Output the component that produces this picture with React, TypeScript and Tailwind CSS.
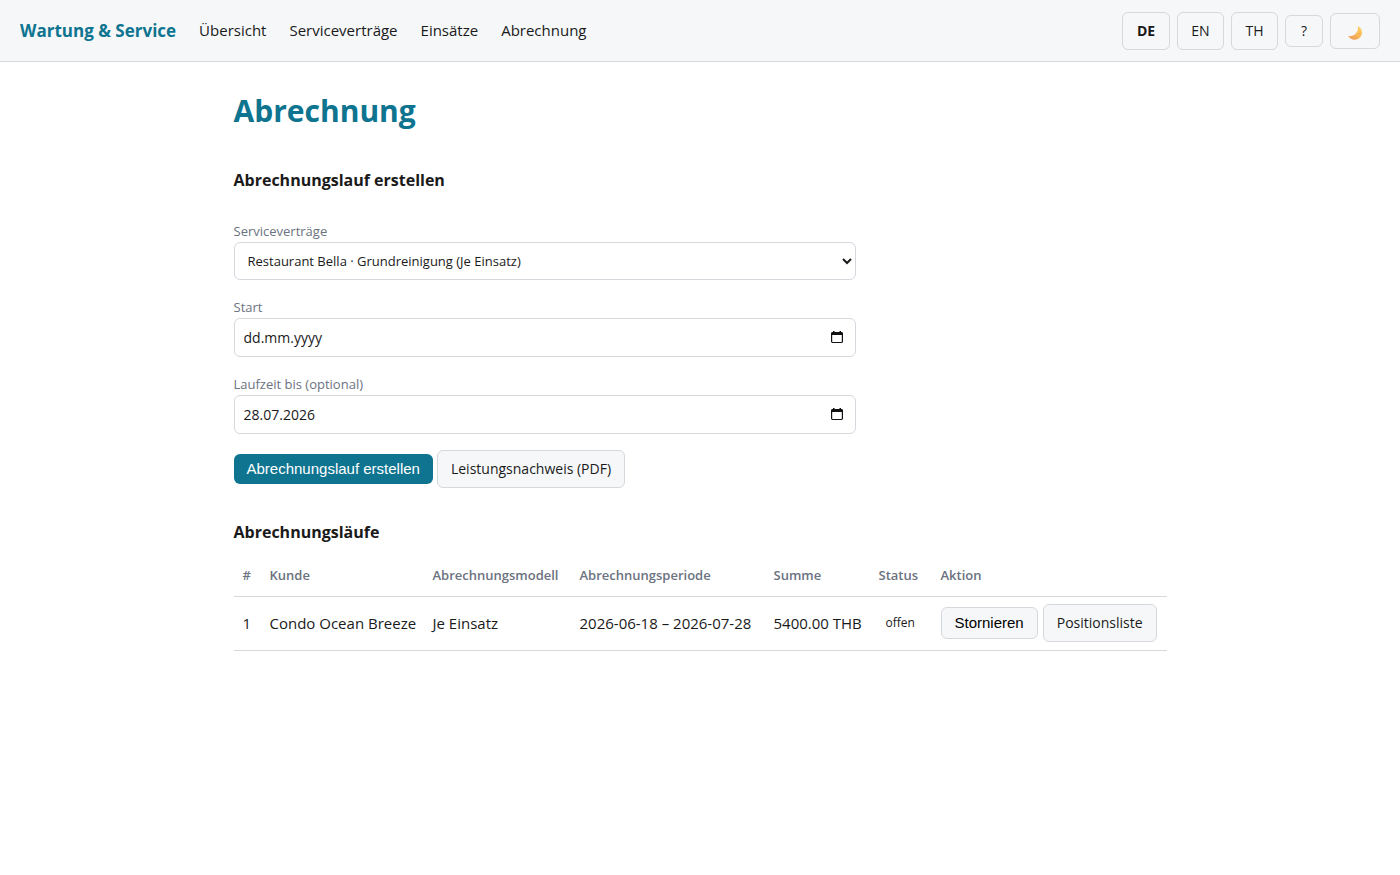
import { useState, type ReactNode } from "react";

const navItems = ["Übersicht", "Serviceverträge", "Einsätze", "Abrechnung"];
const languages = ["DE", "EN", "TH"];
const contracts = ["Restaurant Bella · Grundreinigung (Je Einsatz)", "Condo Ocean Breeze · Je Einsatz"];

const columns = [
  { title: "#", width: "w-[27px]" },
  { title: "Kunde", width: "w-[163px]" },
  { title: "Abrechnungsmodell", width: "w-[147px]" },
  { title: "Abrechnungsperiode", width: "w-[194px]" },
  { title: "Summe", width: "w-[105px]" },
  { title: "Status", width: "w-[62px]" },
  { title: "Aktion", width: "w-[235px]" },
];

const runs = [
  {
    id: 1,
    customer: "Condo Ocean Breeze",
    model: "Je Einsatz",
    period: "2026-06-18 – 2026-07-28",
    total: "5400.00 THB",
    status: "offen",
  },
];

function MoonIcon() {
  return (
    <svg viewBox="0 0 16 16" className="size-4" aria-hidden="true">
      <defs>
        <linearGradient id="moon" x1="0" y1="1" x2="1" y2="0">
          <stop offset="0" stopColor="#e8935a" />
          <stop offset="0.5" stopColor="#fbb858" />
          <stop offset="1" stopColor="#ffd76a" />
        </linearGradient>
      </defs>
      <path
        d="M10.8 1C13.8 2.400 15.500 5.300 15 8.600C14.400 12.400 11.200 15 7.400 14.800C4.600 14.700 2.200 13.200 1 10.800C3.400 11.600 6.200 11.100 8.300 9.100C10.700 6.900 11.600 3.900 10.800 1Z"
        fill="url(#moon)"
      />
      <circle cx="12.600" cy="9" r="0.800" fill="#f0a050" />
      <circle cx="9" cy="12.300" r="0.700" fill="#e89550" />
    </svg>
  );
}

function CalendarIcon() {
  return (
    <svg viewBox="0 0 12 13" className="h-[13px] w-3" aria-hidden="true">
      <path
        fill="#111"
        fillRule="evenodd"
        d="M2 0h1.500v1h5V0H10v1h.5c.8 0 1.500.6 1.500 1.400v8.200c0 .8-.7 1.400-1.500 1.400h-9C.7 12 0 11.400 0 10.600V2.400C0 1.600.7 1 1.500 1H2zM1.200 4v6.400c0 .3.200.5.5.5h8.600c.3 0 .5-.2.5-.5V4z"
      />
    </svg>
  );
}

function DateField({ id, label, initial }: { id: string; label: string; initial: string }) {
  const [value, setValue] = useState(initial);
  return (
    <div className="mb-4 flex flex-col">
      <label htmlFor={id} className="text-[13px] leading-[22px] text-[#6b7280]">
        {label}
      </label>
      <div className="flex h-[39px] items-center rounded-md border border-[#d5d8dd] bg-white pr-3 pl-[9px]">
        <input
          id={id}
          type="text"
          value={value}
          placeholder="dd.mm.yyyy"
          onChange={(e) => setValue(e.target.value)}
          className="min-w-0 flex-1 text-sm outline-none placeholder:text-[#1a1a1a]"
        />
        <button type="button" aria-label={`${label}: Kalender`}>
          <CalendarIcon />
        </button>
      </div>
    </div>
  );
}

function LinkButton({ children }: { children: ReactNode }) {
  return (
    <a
      href="#"
      className="flex h-[38px] items-center rounded-md border border-[#d5d8dd] bg-[#f5f7f9] px-[13px] text-sm"
    >
      {children}
    </a>
  );
}

export default function App() {
  const [language, setLanguage] = useState("DE");
  return (
    <div className="bg-white font-['Open_Sans','Noto_Sans',sans-serif] text-[15px] text-[#1a1a1a]">
      <header className="flex min-h-[62px] flex-wrap items-center justify-between gap-x-4 border-b border-[#d5d8dd] bg-[#f5f7f9] px-5">
        <div className="flex flex-wrap items-center gap-[23px]">
          <a href="#" className="text-[17px] font-bold text-[#0e7490]">
            Wartung &amp; Service
          </a>
          <nav className="flex flex-wrap gap-[23px] text-[15px]">
            {navItems.map((item) => (
              <a key={item} href="#">
                {item}
              </a>
            ))}
          </nav>
        </div>
        <div className="flex items-center gap-[7px] text-sm">
          {languages.map((code) => (
            <button
              key={code}
              type="button"
              onClick={() => setLanguage(code)}
              className={
                code === language
                  ? "h-[38px] w-12 rounded-md border border-[#d5d8dd] font-bold"
                  : "h-[38px] w-[47px] rounded-md border border-[#d5d8dd]"
              }
            >
              {code}
            </button>
          ))}
          <button type="button" className="h-8 w-[38px] rounded-md border border-[#d5d8dd]">
            ?
          </button>
          <button
            type="button"
            aria-label="Dunkles Design"
            className="flex h-9 w-[50px] items-center justify-center rounded-md border border-[#d5d8dd] pt-1"
          >
            <MoonIcon />
          </button>
        </div>
      </header>

      <main className="mx-auto w-full max-w-[933px]">
        <h1 className="pt-7 text-[30px] leading-[42px] font-bold text-[#0e7490]">Abrechnung</h1>

        <section className="pt-9">
          <h2 className="text-base leading-6 font-bold">Abrechnungslauf erstellen</h2>
          <form className="max-w-[622px] pt-7" onSubmit={(e) => e.preventDefault()}>
            <div className="mb-4 flex flex-col">
              <label htmlFor="contract" className="text-[13px] leading-[22px] text-[#6b7280]">
                Serviceverträge
              </label>
              <select
                id="contract"
                className="h-[38px] w-full rounded-md border border-[#d5d8dd] bg-white px-[9px] text-[13px]"
              >
                {contracts.map((contract) => (
                  <option key={contract}>{contract}</option>
                ))}
              </select>
            </div>
            <DateField id="start" label="Start" initial="" />
            <DateField id="end" label="Laufzeit bis (optional)" initial="28.07.2026" />
            <div className="flex flex-wrap items-center gap-1">
              <button
                type="submit"
                className="h-[30px] rounded-md bg-[#0e7490] px-[13px] font-['Liberation_Sans',Arial,sans-serif] text-[15px] text-white"
              >
                Abrechnungslauf erstellen
              </button>
              <LinkButton>Leistungsnachweis (PDF)</LinkButton>
            </div>
          </form>
        </section>

        <section className="pt-8">
          <h2 className="text-base leading-6 font-bold">Abrechnungsläufe</h2>
          <table className="mt-3 w-full table-fixed border-collapse text-left">
            <thead>
              <tr className="h-10 border-b border-[#d5d8dd] text-[13px] text-[#6b7280]">
                {columns.map((column) => (
                  <th key={column.title} scope="col" className={`${column.width} px-[9px] font-semibold`}>
                    {column.title}
                  </th>
                ))}
              </tr>
            </thead>
            <tbody>
              {runs.map((run) => (
                <tr key={run.id} className="h-[54px] border-b border-[#d5d8dd] whitespace-nowrap">
                  <td className="px-[9px]">{run.id}</td>
                  <td className="px-[9px]">{run.customer}</td>
                  <td className="px-[9px]">{run.model}</td>
                  <td className="px-[9px]">{run.period}</td>
                  <td className="px-[9px]">{run.total}</td>
                  <td className="px-4 text-xs">{run.status}</td>
                  <td className="px-[9px]">
                    <div className="flex items-center gap-[5px]">
                      <button
                        type="button"
                        className="h-8 rounded-md border border-[#d5d8dd] bg-[#f5f7f9] px-[13px] font-['Liberation_Sans',Arial,sans-serif] text-[15px] text-black"
                      >
                        Stornieren
                      </button>
                      <LinkButton>Positionsliste</LinkButton>
                    </div>
                  </td>
                </tr>
              ))}
            </tbody>
          </table>
        </section>
      </main>
    </div>
  );
}
